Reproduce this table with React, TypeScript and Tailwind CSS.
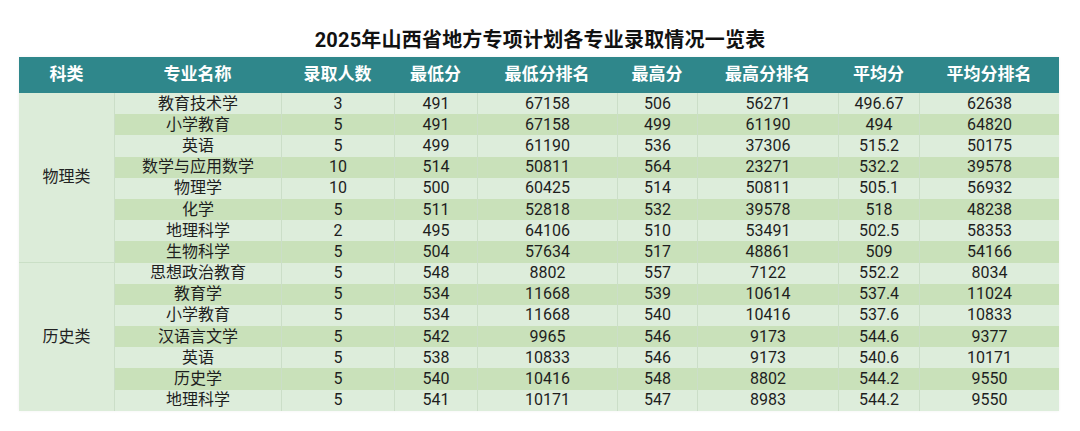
import React from "react";

const headers = ["科类", "专业名称", "录取人数", "最低分", "最低分排名", "最高分", "最高分排名", "平均分", "平均分排名"];

const rows: string[][] = [
  ["教育技术学", "3", "491", "67158", "506", "56271", "496.67", "62638"],
  ["小学教育", "5", "491", "67158", "499", "61190", "494", "64820"],
  ["英语", "5", "499", "61190", "536", "37306", "515.2", "50175"],
  ["数学与应用数学", "10", "514", "50811", "564", "23271", "532.2", "39578"],
  ["物理学", "10", "500", "60425", "514", "50811", "505.1", "56932"],
  ["化学", "5", "511", "52818", "532", "39578", "518", "48238"],
  ["地理科学", "2", "495", "64106", "510", "53491", "502.5", "58353"],
  ["生物科学", "5", "504", "57634", "517", "48861", "509", "54166"],
  ["思想政治教育", "5", "548", "8802", "557", "7122", "552.2", "8034"],
  ["教育学", "5", "534", "11668", "539", "10614", "537.4", "11024"],
  ["小学教育", "5", "534", "11668", "540", "10416", "537.6", "10833"],
  ["汉语言文学", "5", "542", "9965", "546", "9173", "544.6", "9377"],
  ["英语", "5", "538", "10833", "546", "9173", "540.6", "10171"],
  ["历史学", "5", "540", "10416", "548", "8802", "544.2", "9550"],
  ["地理科学", "5", "541", "10171", "547", "8983", "544.2", "9550"],
];

export default function App() {
  return (
    <div
      className="w-[1080px] h-[431px] bg-white overflow-hidden"
      style={{ fontFamily: 'Roboto, "Noto Sans CJK SC", sans-serif' }}
    >
      <div className="pt-[27px] h-[57px] text-center text-[20px] leading-[26px] font-bold text-[#111] tracking-[0.2px]">
        2025年山西省地方专项计划各专业录取情况一览表
      </div>
      <div className="ml-[19px] w-[1040px] grid grid-cols-[95px_167px_113px_83px_140px_80px_141px_81px_140px] grid-rows-[36px_repeat(15,21.2px)] shadow-[0_0_3px_rgba(0,0,0,0.06)]">
        {headers.map((h) => (
          <div
            key={h}
            className="bg-[#2f878b] text-white font-bold text-[17px] flex items-center justify-center"
          >
            {h}
          </div>
        ))}
        <div className="row-span-8 col-start-1 row-start-2 bg-[#dcecd9] flex items-center justify-center text-[16px] text-[#222] border-b border-[#cadfc6]">
          物理类
        </div>
        <div className="row-span-7 col-start-1 row-start-10 bg-[#dcecd9] flex items-center justify-center text-[16px] text-[#222]">
          历史类
        </div>
        {rows.map((r, ri) => {
          const bg = ri % 2 === 0 ? "bg-[#ddeddb]" : "bg-[#c9e1ba]";
          return r.map((c, ci) => (
            <div
              key={`${ri}-${ci}`}
              style={{ gridRowStart: ri + 2, gridColumnStart: ci + 2 }}
              className={`${bg} border-l border-[#cbdec8] flex items-center justify-center text-[16px] leading-none text-[#1e1e1e]`}
            >
              {c}
            </div>
          ));
        })}
      </div>
    </div>
  );
}
